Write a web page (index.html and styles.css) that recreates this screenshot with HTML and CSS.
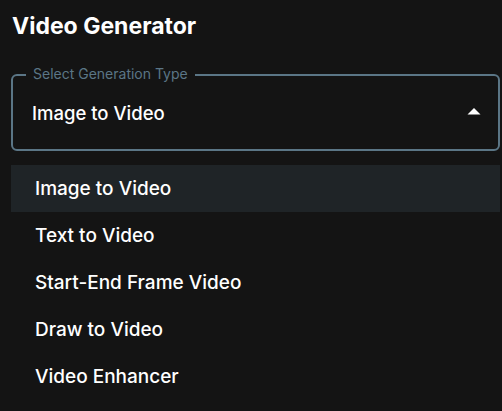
FILE: index.html
```html
<!DOCTYPE html>
<html>
<head>
<meta charset="utf-8">
<link rel="stylesheet" href="styles.css">
</head>
<body>
<div class="panel">
  <h1 class="title">Video Generator</h1>
  <div class="select">
    <span class="select-label">Select Generation Type</span>
    <span class="select-value">Image to Video</span>
    <svg class="select-arrow" width="14" height="8" viewBox="0 0 14 8"><path d="M0.5 7.5 L7 1 L13.5 7.5 Z" fill="#ffffff"/></svg>
  </div>
  <ul class="menu">
    <li class="menu-item selected">Image to Video</li>
    <li class="menu-item">Text to Video</li>
    <li class="menu-item">Start-End Frame Video</li>
    <li class="menu-item">Draw to Video</li>
    <li class="menu-item">Video Enhancer</li>
  </ul>
</div>
</body>
</html>
```
FILE: styles.css
```css
html, body {
  margin: 0;
  padding: 0;
  background: #141414;
}
body {
  font-family: Inter, "Noto Sans", sans-serif;
  color: #ffffff;
  width: 502px;
  height: 411px;
  overflow: hidden;
}
.panel {
  padding: 0 2px 0 11px;
}
.title {
  margin: 0;
  padding-top: 10px;
  padding-left: 1px;
  font-size: 23px;
  font-weight: 700;
  line-height: 32px;
}
.select {
  margin-top: 32px;
  height: 77px;
  box-sizing: border-box;
  border: 2px solid #5b7686;
  border-radius: 6px;
  padding: 0 17px 0 19px;
  display: flex;
  align-items: center;
  justify-content: space-between;
  position: relative;
}
.select-label {
  position: absolute;
  top: -11px;
  left: 13px;
  padding: 0 7px;
  font-size: 14px;
  line-height: 18px;
  color: #5b7686;
  background: #141414;
}
.select-value {
  font-size: 18.5px;
  font-weight: 500;
}
.select-arrow {
  display: block;
  margin-top: -3px;
}
.menu {
  list-style: none;
  margin: 14px 0 0 0;
  padding: 0;
}
.menu-item {
  height: 47px;
  line-height: 47px;
  padding-left: 24px;
  font-size: 19px;
  font-weight: 500;
}
.menu-item.selected {
  background: #1f2427;
}
```
